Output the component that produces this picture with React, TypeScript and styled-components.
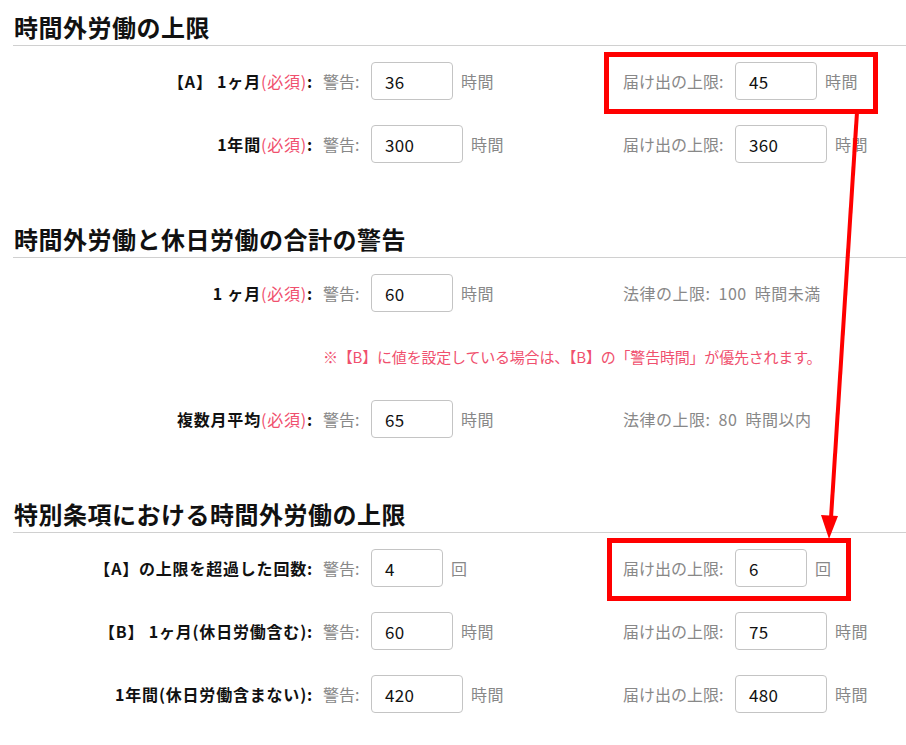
import React from "react";
import styled, { createGlobalStyle } from "styled-components";

const GlobalStyle = createGlobalStyle`
  html, body {
    margin: 0;
    padding: 0;
    background: #fff;
  }
  body {
    font-family: "Noto Sans CJK JP", "Noto Sans", sans-serif;
    color: #222;
  }
`;

const Page = styled.div`
  position: relative;
  width: 906px;
  height: 745px;
  overflow: hidden;
  padding: 9px 0 0 13px;
  box-sizing: border-box;
`;

const Section = styled.section`
  & + & {
    margin-top: 58px;
  }
`;

const Heading = styled.h2`
  margin: 0;
  font-size: 24px;
  letter-spacing: 0.5px;
  line-height: 36px;
  font-weight: 700;
  color: #111;
  padding-left: 1px;
  border-bottom: 1px solid #d0d0d0;
`;

const Rows = styled.div`
  display: grid;
  grid-template-columns: 300px 290px auto;
  column-gap: 10px;
  row-gap: 25px;
  margin-top: 16px;
  align-items: center;
`;

const Label = styled.div`
  font-size: 16px;
  letter-spacing: 0.8px;
  font-weight: 700;
  text-align: right;
  white-space: nowrap;
  color: #111;
`;

const Required = styled.span`
  color: #f0506e;
  font-weight: 400;
`;

const Field = styled.div`
  display: flex;
  align-items: center;
  height: 38px;
  font-size: 16px;
  letter-spacing: 0.5px;
  color: #888;
  white-space: nowrap;
`;

const Caption = styled.span`
  letter-spacing: 0;
  margin-right: 11.5px;
`;

const Unit = styled.span`
  margin-left: 8px;
`;

const LawText = styled.span`
  word-spacing: 4px;
`;

const NumberBox = styled.div<{ $w: number }>`
  width: ${(p) => p.$w}px;
  height: 38px;
  box-sizing: border-box;
  border: 1px solid #c4c4c4;
  border-radius: 4px;
  padding-left: 13px;
  display: flex;
  align-items: center;
  font-size: 17px;
  letter-spacing: 0.3px;
  color: #111;
`;

const Note = styled.div`
  grid-column: 2 / 4;
  height: 38px;
  display: flex;
  align-items: center;
  font-size: 15px;
  letter-spacing: -0.2px;
  color: #f0506e;
  white-space: nowrap;
`;

const Mark = styled.div<{ $x: number; $y: number; $w: number; $h: number }>`
  position: absolute;
  left: ${(p) => p.$x}px;
  top: ${(p) => p.$y}px;
  width: ${(p) => p.$w}px;
  height: ${(p) => p.$h}px;
  box-sizing: border-box;
  border: 5px solid #ff0000;
  pointer-events: none;
`;

const ArrowLayer = styled.svg`
  position: absolute;
  left: 0;
  top: 0;
  pointer-events: none;
`;

type Input = { caption: string; value: string; width: number; unit: string };

type Row = {
  label: React.ReactNode;
  warn: Input;
  right?: Input;
  law?: string;
};

function InputField({ caption, value, width, unit }: Input) {
  return (
    <Field>
      <Caption>{caption}</Caption>
      <NumberBox $w={width}>{value}</NumberBox>
      <Unit>{unit}</Unit>
    </Field>
  );
}

const req = <Required>(必須)</Required>;

const section1: Row[] = [
  {
    label: <>【A】 1ヶ月{req}:</>,
    warn: { caption: "警告:", value: "36", width: 82, unit: "時間" },
    right: { caption: "届け出の上限:", value: "45", width: 82, unit: "時間" },
  },
  {
    label: <>1年間{req}:</>,
    warn: { caption: "警告:", value: "300", width: 92, unit: "時間" },
    right: { caption: "届け出の上限:", value: "360", width: 92, unit: "時間" },
  },
];

const section3: Row[] = [
  {
    label: <>【A】の上限を超過した回数:</>,
    warn: { caption: "警告:", value: "4", width: 72, unit: "回" },
    right: { caption: "届け出の上限:", value: "6", width: 72, unit: "回" },
  },
  {
    label: <>【B】 1ヶ月(休日労働含む):</>,
    warn: { caption: "警告:", value: "60", width: 82, unit: "時間" },
    right: { caption: "届け出の上限:", value: "75", width: 92, unit: "時間" },
  },
  {
    label: <>1年間(休日労働含まない):</>,
    warn: { caption: "警告:", value: "420", width: 92, unit: "時間" },
    right: { caption: "届け出の上限:", value: "480", width: 92, unit: "時間" },
  },
];

function renderRow(row: Row, i: number) {
  return (
    <React.Fragment key={i}>
      <Label>{row.label}</Label>
      <InputField {...row.warn} />
      {row.right ? (
        <InputField {...row.right} />
      ) : (
        <Field>
          <LawText>{row.law}</LawText>
        </Field>
      )}
    </React.Fragment>
  );
}

export default function App() {
  return (
    <>
      <GlobalStyle />
      <Page>
        <Section>
          <Heading>時間外労働の上限</Heading>
          <Rows>{section1.map(renderRow)}</Rows>
        </Section>

        <Section>
          <Heading>時間外労働と休日労働の合計の警告</Heading>
          <Rows>
            {renderRow(
              {
                label: <>1 ヶ月{req}:</>,
                warn: { caption: "警告:", value: "60", width: 82, unit: "時間" },
                law: "法律の上限: 100 時間未満",
              },
              0,
            )}
            <Label />
            <Note>
              ※【B】に値を設定している場合は、【B】の「警告時間」が優先されます。
            </Note>
            {renderRow(
              {
                label: <>複数月平均{req}:</>,
                warn: { caption: "警告:", value: "65", width: 82, unit: "時間" },
                law: "法律の上限: 80 時間以内",
              },
              2,
            )}
          </Rows>
        </Section>

        <Section>
          <Heading>特別条項における時間外労働の上限</Heading>
          <Rows>{section3.map(renderRow)}</Rows>
        </Section>

        <Mark $x={604} $y={52} $w={274} $h={62} />
        <Mark $x={607} $y={538} $w={244} $h={63} />
        <ArrowLayer width="906" height="745" viewBox="0 0 906 745">
          <line x1="857" y1="112" x2="831" y2="518" stroke="#ff0000" strokeWidth="4" />
          <polygon points="821,515 838,516 829,539" fill="#ff0000" />
        </ArrowLayer>
      </Page>
    </>
  );
}
